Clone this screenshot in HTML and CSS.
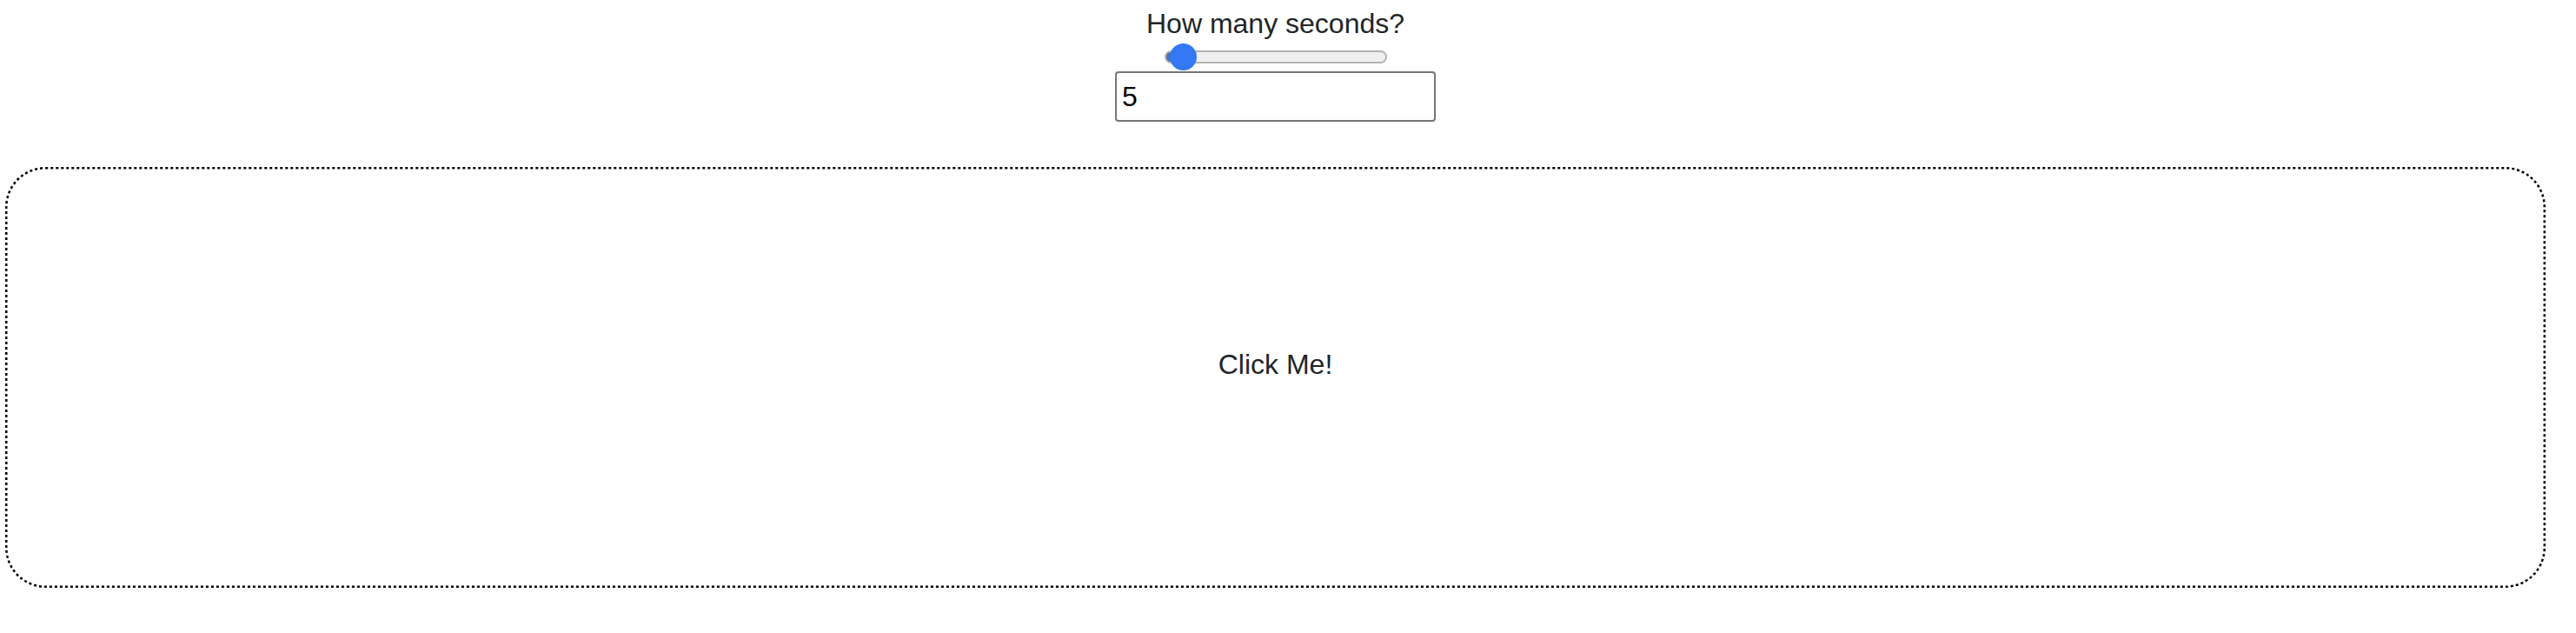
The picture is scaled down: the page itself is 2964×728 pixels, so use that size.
FILE: index.html
```html
<!DOCTYPE html>
<html lang="en">
<head>
<meta charset="utf-8">
<title>Timer</title>
<link rel="stylesheet" href="styles.css">
</head>
<body>
<div class="page">
  <div class="controls">
    <label class="prompt" for="secs">How many seconds?</label>
    <input class="slider" type="range" min="1" max="180" value="5" aria-label="seconds slider">
    <input class="field" id="secs" type="text" value="5">
  </div>
  <div class="clicker">
    <svg class="outline" width="2923" height="484" viewBox="0 0 2923 484" aria-hidden="true">
      <rect x="1.25" y="1.25" width="2920.5" height="481.5" rx="45" ry="45" fill="none" stroke="#000000" stroke-width="2.5" stroke-dasharray="3 3"/>
    </svg>
    <span class="label">Click Me!</span>
  </div>
</div>
</body>
</html>
```

FILE: styles.css
```css
html, body {
  margin: 0;
  padding: 0;
  background: #ffffff;
}

body {
  font-family: "Liberation Sans", Arial, sans-serif;
  color: #212529;
}

.page {
  width: 2923px;
  padding: 0 6px;
  display: flex;
  flex-direction: column;
}

.controls {
  display: flex;
  flex-direction: column;
  align-items: center;
}

.prompt {
  font-size: 32px;
  line-height: 36px;
  padding-top: 9px;
}

.slider {
  -webkit-appearance: none;
  appearance: none;
  width: 256px;
  height: 31px;
  margin: 5px 0 0 0;
  padding: 0;
  background: transparent;
}

.slider::-webkit-slider-runnable-track {
  box-sizing: border-box;
  height: 15px;
  border: 2px solid #b2b2b2;
  border-radius: 8px;
  background: linear-gradient(to right, #4a6fb8 0, #4a6fb8 20px, #efefef 20px);
}

.slider::-webkit-slider-thumb {
  -webkit-appearance: none;
  appearance: none;
  width: 31px;
  height: 31px;
  border-radius: 50%;
  background: #3478f6;
  border: none;
  margin-top: -10px;
}

.field {
  box-sizing: border-box;
  width: 369px;
  height: 58px;
  margin: 1px 0 0 0;
  border: 2px solid #767676;
  border-radius: 4px;
  padding: 0 6px;
  font-family: "Liberation Sans", Arial, sans-serif;
  font-size: 32px;
  color: #000000;
  background: #ffffff;
}

.clicker {
  position: relative;
  box-sizing: border-box;
  margin-top: 52px;
  height: 484px;
  display: flex;
  align-items: center;
  justify-content: center;
  padding-bottom: 30px;
  font-size: 32px;
  line-height: 36px;
}

.outline {
  position: absolute;
  left: 0;
  top: 0;
  pointer-events: none;
}
```
